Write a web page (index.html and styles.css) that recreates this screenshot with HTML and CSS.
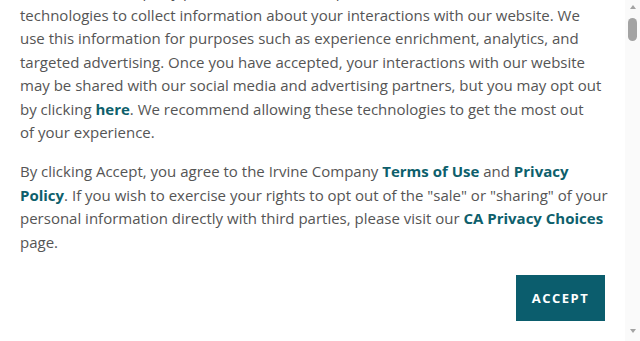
FILE: index.html
```html
<!DOCTYPE html>
<html lang="en">
<head>
<meta charset="utf-8">
<title>Cookie consent</title>
<link rel="stylesheet" href="styles.css">
</head>
<body>
<div class="frame">
  <div class="viewport" id="viewport">
    <div class="dialog">
      <p class="copy">We and our third party partners use cookies, pixels, and similar<br>
      technologies to collect information about your interactions with our website. We<br>
      use this information for purposes such as experience enrichment, analytics, and<br>
      targeted advertising. Once you have accepted, your interactions with our website<br>
      may be shared with our social media and advertising partners, but you may opt out<br>
      by clicking <a class="link" href="#">here</a>. We recommend allowing these technologies to get the most out<br>
      of your experience.</p>
      <p class="copy">By clicking Accept, you agree to the Irvine Company <a class="link" href="#">Terms of Use</a> and <a class="link" href="#">Privacy<br>
      Policy</a>. If you wish to exercise your rights to opt out of the "sale" or "sharing" of your<br>
      personal information directly with third parties, please visit our <a class="link" href="#">CA Privacy Choices</a><br>
      page.</p>
      <div class="actions"><button class="accept" type="button">ACCEPT</button></div>
    </div>
  </div>
  <div class="rail" aria-hidden="true">
    <span class="arrow arrow-up"></span>
    <div class="track"><span class="thumb"></span></div>
    <span class="arrow arrow-down"></span>
  </div>
</div>
<script src="script.js"></script>
</body>
</html>
```
FILE: styles.css
```css
html, body {
  margin: 0;
  padding: 0;
  background: #ffffff;
}
.frame {
  display: flex;
  height: 341px;
  overflow: hidden;
}
.viewport {
  flex: 1;
  min-width: 0;
  height: 341px;
  overflow: hidden;
}
.dialog {
  padding: 26px 20px 40px 20px;
  font-family: "Open Sans", "DejaVu Sans", sans-serif;
  font-size: 15px;
  line-height: 23.5px;
  color: #555555;
}
.copy {
  margin: 0 0 15.5px 0;
  white-space: nowrap;
}
.link {
  color: #0e5f6c;
  font-weight: 700;
  text-decoration: none;
}
.actions {
  display: flex;
  justify-content: flex-end;
  padding-top: 5px;
}
.accept {
  width: 89px;
  height: 46px;
  border: 0;
  background: #0b5d6d;
  color: #ffffff;
  font-family: "Open Sans", "DejaVu Sans", sans-serif;
  font-weight: 700;
  font-size: 13px;
  letter-spacing: 1.5px;
  padding: 0;
}
.rail {
  width: 15px;
  flex: none;
  background: #fafafa;
  display: flex;
  flex-direction: column;
  align-items: center;
}
.arrow {
  width: 0;
  height: 0;
  border-left: 3.5px solid transparent;
  border-right: 3.5px solid transparent;
  flex: none;
}
.arrow-up {
  margin-top: 5px;
  border-bottom: 4px solid #a3a3a3;
}
.arrow-down {
  margin-bottom: 8px;
  border-top: 4px solid #a3a3a3;
}
.track {
  flex: 1;
  width: 100%;
  display: flex;
  justify-content: center;
  padding-top: 9px;
}
.thumb {
  width: 9px;
  height: 23px;
  border-radius: 5px;
  background: #a3a3a3;
}
```
FILE: script.js
```js
document.getElementById('viewport').scrollTop = 46;
```
